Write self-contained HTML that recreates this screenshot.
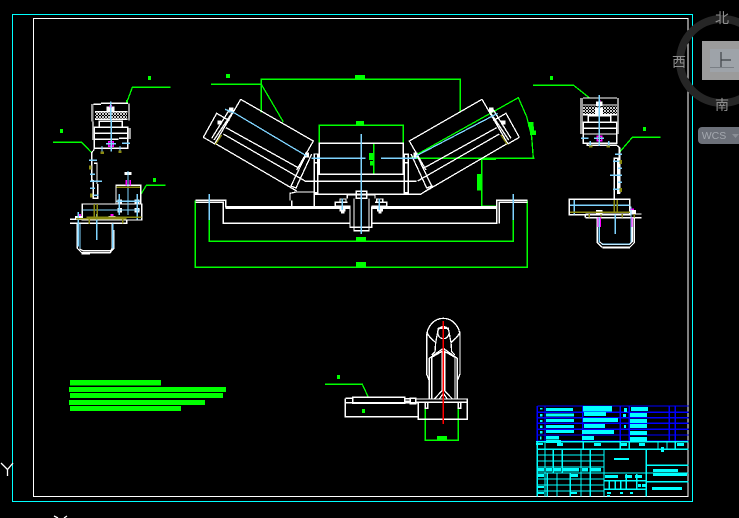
<!DOCTYPE html>
<html><head><meta charset="utf-8"><style>
html,body{margin:0;padding:0;background:#000;width:739px;height:518px;overflow:hidden}
svg{display:block;position:absolute;left:0;top:0}
svg *{vector-effect:non-scaling-stroke}
.w{stroke:#fff;fill:none;stroke-width:1.3}
.g{stroke:#0f0;fill:none;stroke-width:1.3}
.c{stroke:#7fd4ff;fill:none;stroke-width:1.3}
.y{stroke:#8a8a10;fill:none;stroke-width:1.3}
.t{stroke:#0ff;fill:none;stroke-width:1.3}
.b{stroke:#00f;fill:none;stroke-width:1.3}
.r{stroke:#f00;fill:none;stroke-width:1.3}
.m{stroke:#f0f;fill:none;stroke-width:1.3}
.fg{fill:#0f0}.ft{fill:#0ff}.fw{fill:#fff}.fy{fill:#8a8a10}.fm{fill:#f0f}.fs{fill:#999}
</style></head><body>
<svg width="739" height="518" viewBox="0 0 739 518" shape-rendering="crispEdges">
<defs><pattern id="h" width="9" height="9" patternUnits="userSpaceOnUse"><rect width="9" height="9" fill="#000"/><path d="M0,0h3v3h-3zM6,0h3v3h-3zM3,3h3v3h-3zM0,6h3v3h-3zM6,6h3v3h-3z" fill="#ccc"/></pattern></defs>
<rect x="12.5" y="14.5" width="680" height="487" class="t"/>
<rect x="33.5" y="18.5" width="654.5" height="478" class="w"/>

<!-- main view -->
<g transform="translate(190,60) scale(.33333)">
<path class="g" d="M214,158V58H811V158M63,73H214L280,186M388,250V196H640V250M514,250H551V343H514M660,295H1034M660,295L985,113L1010,170L1025,230L1030,295M875,298V438H920M875,298H918M58,480V544H970V480M16,422V622H1012V422"/>
<path class="fg" d="M495,45h30v13h-30zM108,42h12v12h-12zM498,183h24v13h-24zM537,279h14v21h-14zM540,303h10v13h-10zM1014,186h16v14h-16zM1018,200h14v12h-14zM1020,212h18v13h-18zM861,342h14v50h-14zM498,531h30v13h-30zM498,606h30v16h-30z"/>
<path class="w" d="M152,118L370,243L320,330M152,118L75,250L320,393M108,203L328,325M100,222L345,363M132,150L72,240M122,143L65,235M350,280L303,378L318,384L365,282M40,232L80,160L118,182M40,232L75,252"/>
<path class="fw" d="M117,143h14v14h-14zM82,182h13v12h-13zM345,278h12v14h-12z"/>
<g transform="matrix(-1 0 0 1 1028 0)">
<path class="w" d="M152,118L370,243L320,330M152,118L75,250L320,393M108,203L328,325M100,222L345,363M132,150L72,240M122,143L65,235M350,280L303,378L318,384L365,282M40,232L80,160L118,182M40,232L75,252"/>
<path class="fw" d="M117,143h14v14h-14zM82,182h13v12h-13zM345,278h12v14h-12z"/>
</g>
<path class="w" d="M388,250H640V343H388ZM373,282H383V398H373ZM373,308H383M643,283H655V398H643ZM643,308H655M345,364H680M300,422V400L318,396H373M373,403H692L730,378M305,422V445M373,396V445M16,421H107V440H482M16,427H100V490H480M107,445H482M1012,421H920V490H545M1012,427H928V490M920,440V445M545,440H920M545,445H920M480,440V502H545V440M492,415V512H537V415M499,394H530V415H499ZM472,415V405H555V415M436,438V427H472M590,438V427H555M436,438H482M545,438H590M450,417H468V427H450ZM560,417H578V427H560Z"/>
<path class="fw" d="M449,446h18v8h-4v6h-10v-6h-4zM561,446h18v8h-4v6h-10v-6h-4z"/>
<path class="c" d="M514,222V522M365,295H527M573,295H680M105,148L135,160L350,288M923,160L678,288M58,402V480M970,402V480M457,415V450M568,415V450"/>
<path class="y" d="M95,225L76,254M933,225L952,254"/>
</g>

<!-- left view -->
<g transform="translate(40,60) scale(.33333)">
<path class="g" d="M39,247H125L155,278M260,128L277,82H392M302,404L319,376H377"/>
<path class="fg" d="M324,48h9v12h-9zM60,207h9v12h-9zM339,354h9v12h-9zM258,120h6v10h-6z"/>
<path class="fs" d="M153,132h8v53h-8zM156,185h6v55h-6zM264,130h6v52h-6zM265,204h8v33h-8z"/>
<rect x="165" y="158" width="96" height="20" fill="url(#h)"/>
<path class="w" d="M161,133H183M183,130H264M165,155H262M165,178H262M178,184H247V202H178ZM163,202H263V265H163ZM163,220H263M163,238H235M237,235H263M163,265H250M155,278L163,268M155,278V360L160,362V415H173V372M162,310H171V372M228,376H302V432H228ZM127,432H305V480H127ZM90,478H127M90,490H260V480M112,490V565L125,578H210L222,565V512H218V490M120,490V568L128,572H212L216,566V490M125,581H150"/>
<path class="fw" d="M200,140h24v16h-24zM105,468h20v12h-20zM205,468h22v11h-22zM253,336h22v9h-22zM232,418h14v14h-14zM284,418h14v14h-14zM232,444h14v14h-14zM284,444h14v14h-14z"/>
<path class="m" d="M206,245h14v14h-14zM259,360v16M271,360v16"/>
<path class="fm" d="M208,135h8v8h-8zM115,462h8v6h-8zM212,462h8v6h-8z"/>
<path class="c" d="M212,124V180M214,180V275M198,251H228M246,250H270M186,258V278M240,258V278M147,301H171M150,343H165M150,364H186M150,385H165M160,406H176M264,333V465M238,402V465M292,402V478M230,424H300M127,450H300M115,456V560M170,462V540M120,490V565M218,490V565"/>
<path class="y" d="M230,382H300M163,432V478M172,432V478M140,472H305M108,476H260M148,478V492M248,478V490"/>
<path class="fy" d="M182,275h10v7h-10zM235,272h10v7h-10zM147,316h7v12h-7zM150,400h7v12h-7z"/>
</g>

<!-- right view -->
<g transform="translate(530,60) scale(.33333)">
<path class="g" d="M9,76H131L180,115M270,275L307,232H392"/>
<path class="fg" d="M60,48h9v12h-9zM339,201h9v12h-9z"/>
<path class="fs" d="M150,114h9v108h-9zM261,114h6v108h-6z"/>
<rect x="159" y="140" width="102" height="24" fill="url(#h)"/>
<path class="w" d="M159,114H261M159,135H261M159,164H261M175,168H242V187H175ZM160,187H260V250H160ZM160,205H260M160,222H260M172,250V256H260L268,262V400H263V295H253V418M270,262V400M118,418H299V464H118ZM166,462H335M166,473H335M166,462V473M202,473V548L215,561H300L313,548V473M208,473V545L218,553H298L307,545V473M218,563H300"/>
<path class="fw" d="M198,124h20v14h-20zM198,450h20v14h-20zM298,450h20v14h-20zM195,142h24v20h-24z"/>
<path class="m" d="M202,229h13v13h-13z"/>
<path class="fm" d="M203,473h10v28h-10zM303,473h4v28h-4zM205,120h6v5h-6zM300,445h12v5h-12z"/>
<path class="c" d="M208,105V258M153,235H176M192,235H222M181,243V262M236,243V262M255,283H276M249,304H276M264,325H276M240,346H276M264,367H276M249,388H276M133,420V464M120,436H298M256,464V522M208,473V548M303,440V548M215,552H300"/>
<path class="y" d="M120,457H300M253,420V457M262,420V457M178,462V472M213,462V472M277,462V472M313,462V472"/>
<path class="fy" d="M177,256h10v7h-10zM230,256h10v7h-10zM268,300h8v12h-8zM268,384h8v12h-8z"/>
</g>

<!-- lower view -->
<g transform="translate(320,300) scale(.33333)">
<path class="g" d="M15,253H127L145,292M316,325V421H415V325"/>
<path class="fg" d="M51,225h9v12h-9zM126,327h9v12h-9zM351,408h30v13h-30z"/>
<path class="w" d="M327,240L320,222V110A50,55 0 1 1 420,110V222L413,240M320,95C325,112 340,120 347,128L345,155L335,165M420,95C415,112 400,120 393,128L395,155L405,165M347,128L355,85H385L393,128M370,80A17,18 0 1 0 370.100,80M328,298V175L370,145L412,175V298M335,298V172L370,152L405,172V298M366,155V272H374V155M343,297L366,272M397,297L374,272M358,297L370,280L382,297M76,295H100M76,295V350H295M76,308H295M98,292H254V310H98ZM254,296H271M254,304H271M271,295H287V311H271ZM287,297H442V307H287ZM295,307V358H442V297M316,307V325H323V307M415,307V325H422V307"/>
<path class="r" d="M370,63V372"/>
</g>

<!-- notes -->
<path class="fg" d="M70,380h91v5.500h-91zM69,387h157v5h-157zM70,393h153v5h-153zM69,400h136v5h-136zM70,406h111v5h-111z"/>

<!-- title block -->
<g transform="translate(530,400) scale(.33333)">
<path class="b" d="M22,18H476M22,37H476M22,53H476M22,70H476M22,88H476M22,105H476M22,123H476M22,18V123M45,18V123M158,18V123M271,18V123M298,18V123M418,18V123M436,18V123"/>
<path class="t" d="M18,125H476M22,148H476M22,125V290M45,125V290M160,125V148M271,125V148M298,125V148M384,125V148M411,125V148M436,125V148M22,165H222M22,183H222M22,201H222M22,219H222M22,237H222M22,255H222M22,273H222M70,148V219M97,148V219M153,148V290M181,148V290M52,219V290M81,219V290M121,219V290M222,148V290M349,148V290M222,219H476M222,242H349M222,268H349M349,196H476M349,245H476M238,242V268M256,242V268M272,242V268M289,222V268M320,222V268"/>
<path class="ft" d="M48,24h81v9h-81zM159,18h87v16h-87zM48,40h84v9h-84zM162,36h66v12h-66zM48,57h84v9h-84zM159,54h105v12h-105zM48,75h84v9h-84zM162,72h63v12h-63zM48,90h84v9h-84zM156,90h96v12h-96zM48,108h39v10h-39zM156,108h36v12h-36zM48,120h45v9h-45zM18,129h21v6h-21zM81,129h18v9h-18zM303,21h51v12h-51zM300,39h51v12h-51zM300,57h51v12h-51zM300,72h51v12h-51zM300,93h51v12h-51zM300,111h51v12h-51zM282,24h9v12h-9zM279,42h9v9h-9zM282,75h6v9h-6zM192,129h21v9h-21zM273,129h18v9h-18zM327,129h18v9h-18zM441,129h21v9h-21zM393,141h9v15h-9zM24,204h18v10h-18zM48,204h18v10h-18zM72,204h21v10h-21zM99,204h48v10h-48zM156,204h18v10h-18zM183,204h30v10h-30zM24,222h18v9h-18zM123,222h21v9h-21zM24,258h18v6h-18zM24,276h18v6h-18zM123,276h18v6h-18zM252,174h45v6h-45zM369,207h75v9h-75zM369,219h102v9h-102zM366,261h90v9h-90zM225,225h39v9h-39zM285,225h21v9h-21zM315,225h21v9h-21zM324,252h9v9h-9zM336,252h12v9h-12zM231,276h12v6h-12zM270,276h9v6h-9zM300,276h9v6h-9zM231,285h9v5h-9zM30,24h8v4h-8zM30,42h8v8h-8zM30,60h8v6h-8zM30,76h8v8h-8zM30,93h8v8h-8zM30,110h5v8h-5z"/>
</g>

<!-- Y axis -->
<path class="w" d="M1,463L7.500,469.500L13,463M7.500,469.500V476M54,516L58,518M67,516L64,518" shape-rendering="auto"/>
</svg>

<!-- view cube -->
<svg width="739" height="518" viewBox="0 0 739 518">
<circle cx="722" cy="61" r="42" fill="none" stroke="#262626" stroke-width="8"/>
<rect x="702" y="41" width="40" height="39" fill="#9b9b9b"/>
<rect x="710" y="49" width="32" height="23" fill="#9ea3a9"/>
<path d="M710,67.500H734" stroke="#7a7f85" stroke-width="1"/>
<path d="M721,52V67M721,60H731" stroke="#3f4348" stroke-width="1.200" fill="none"/>
<g fill="#8f8f8f" font-family="'Liberation Sans','Noto Sans CJK SC',sans-serif" font-size="14" text-anchor="middle">
<text x="722" y="23">北</text>
<text x="722" y="110">南</text>
<text x="679" y="67">西</text>
</g>
<rect x="698" y="127" width="46" height="17" rx="4" fill="#6c7079"/>
<text x="714" y="139" fill="#a4a8af" font-family="'Liberation Sans',sans-serif" font-size="10.500" text-anchor="middle">WCS</text>
<path d="M732,134h7l-3.500,4z" fill="#8a8e96"/>
</svg>
</body></html>
